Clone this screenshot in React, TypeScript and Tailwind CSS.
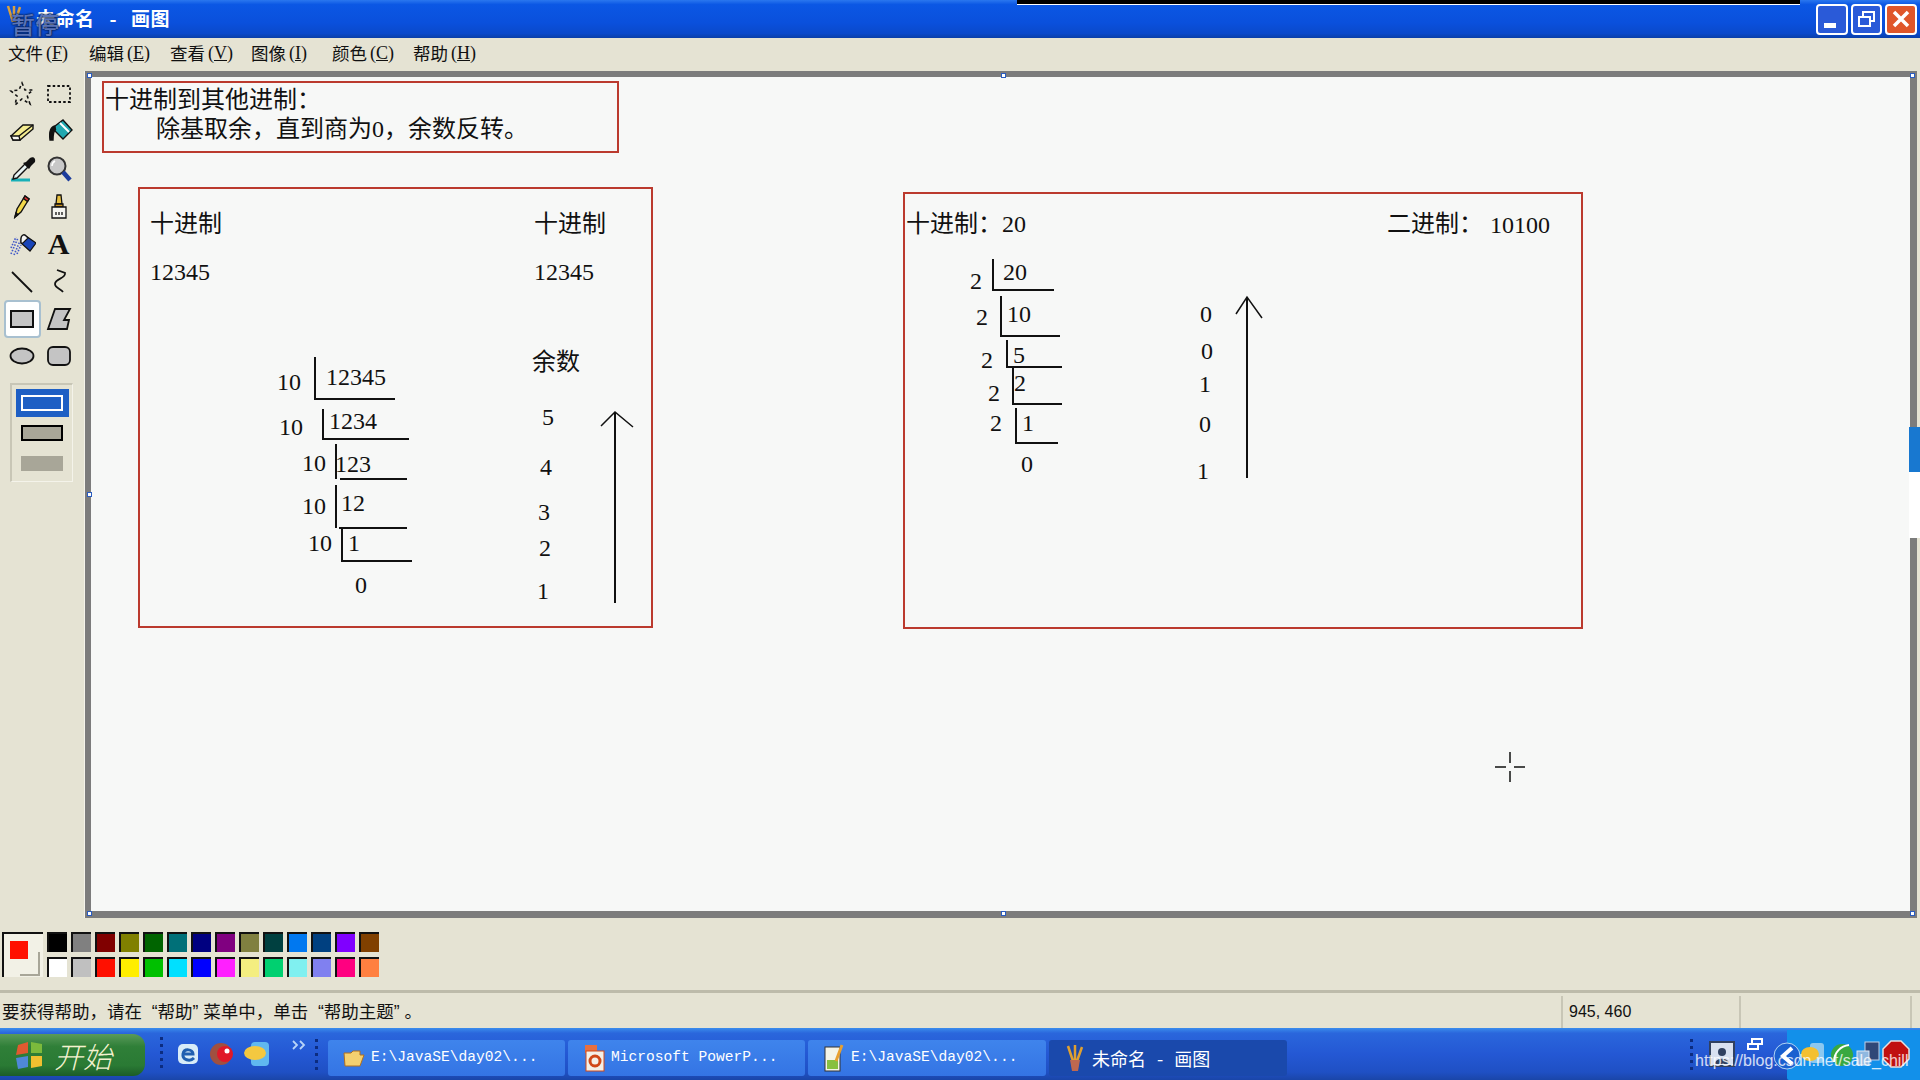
import React from 'react';

const serif = "font-['Liberation_Serif','Noto_Sans_CJK_SC',serif]";
const cjk = "font-['Noto_Sans_CJK_SC','Liberation_Sans',sans-serif]";
const latinFirst = "font-['Liberation_Sans','Noto_Sans_CJK_SC',sans-serif]";
const mono = "font-['Liberation_Mono','Noto_Sans_CJK_SC',monospace]";

const T: React.FC<{ c: string; children: React.ReactNode }> = ({ c, children }) => (
  <span className={`absolute -translate-y-1/2 whitespace-pre text-[24px] leading-none text-[#111] ${serif} ${c}`}>{children}</span>
);

const Handle: React.FC<{ c: string }> = ({ c }) => (
  <div className={`absolute h-[5px] w-[5px] border border-[#2a5cc0] bg-white ${c}`} />
);

// toolbox icons, one per cell
const toolIcons: React.ReactNode[] = [
  <path d="M14 3 L17 10 L25 10 L19 15 L22 24 L14 19 L7 25 L9 16 L3 11 L11 10 Z" fill="none" stroke="#111" strokeWidth="1.6" strokeDasharray="3 3" />,
  <rect x="3" y="6" width="22" height="16" fill="none" stroke="#111" strokeWidth="1.8" strokeDasharray="2.5 2.2" />,
  <g stroke="#111" strokeWidth="1.4"><path d="M3 19 L15 8 L25 8 L25 12 L12 23 L5 23 Z" fill="#f4ec90" /><path d="M3 19 L11 19 L12 23 L5 23 Z" fill="#f5f5f0" /><path d="M11 19 L25 8" /></g>,
  <g stroke="#111" strokeWidth="1.4"><path d="M10 9 L18 3 L27 13 L18 22 L10 14 Z" fill="#20a8b0" /><path d="M15 6 L24 15" stroke="#fff" strokeWidth="2" /><path d="M10 9 C5 10 4 15 5 23 L8 23 C8 18 8 14 11 12" fill="#111" /></g>,
  <g><path d="M3 25 L22 25" stroke="#18b0b8" strokeWidth="3" /><path d="M5 24 L6 20 L17 9 L20 12 L9 23 Z" fill="#e8f4f4" stroke="#111" strokeWidth="1.4" /><path d="M15 8 L21 14 L23 11 L27 7 C28 3 25 1 22 3 L18 7 Z" fill="#111" /></g>,
  <g><circle cx="12" cy="11" r="8.5" fill="#c8c8c8" stroke="#333" strokeWidth="2" /><path d="M10 6 A6 6 0 0 0 7 11" stroke="#fff" strokeWidth="1.5" fill="none" /><path d="M18 17 L25 25" stroke="#1c3c9c" strokeWidth="4.5" /></g>,
  <g stroke="#111" strokeWidth="1.4"><path d="M7 25 L9 17 L17 4 L21 7 L13 20 Z" fill="#f2d84a" /><path d="M15.5 6.5 L17 4 L21 7 L19.5 9.5 Z" fill="#d83030" /><path d="M7 25 L8 21 L10 22.5 Z" fill="#111" /></g>,
  <g stroke="#111" strokeWidth="1.3"><path d="M12 3 L16 3 L17 12 L11 12 Z" fill="#e8c040" /><path d="M10 12 L18 12 L18 15 L10 15 Z" fill="#c89020" /><path d="M7 15 L21 15 L21 26 L7 26 Z" fill="#f4f4f0" /><path d="M11 20 L11 23 M14 20 L14 23 M17 20 L17 23" /></g>,
  <g><path d="M3 24 L10 8 M6 25 L12 11 M3 18 L8 7 M9 24 L13 15" stroke="#4058c8" strokeWidth="1.6" strokeDasharray="1.5 1.5" /><path d="M13 9 C13 5 16 4 18 6 L28 13 L22 21 L13 13 Z" fill="#1844b8" stroke="#111" strokeWidth="1.2" /><path d="M13 9 C13 5 16 4 18 6 L20 8 L15 13 L13 13 Z" fill="#f4f4f4" stroke="#111" strokeWidth="1.2" /></g>,
  null,
  <path d="M4 5 L24 25" stroke="#111" strokeWidth="1.8" />,
  <path d="M12 3 L20 6 C21 12 10 11 10 17 C10 21 16 22 18 25" fill="none" stroke="#111" strokeWidth="1.8" />,
  <rect x="3" y="6" width="22" height="16" fill="#c4c4c4" stroke="#111" strokeWidth="2" />,
  <path d="M10 4 L25 4 L19 15 L24 15 L22 24 L3 24 Z" fill="#c4c4c4" stroke="#111" strokeWidth="1.8" />,
  <ellipse cx="14" cy="14" rx="11.5" ry="7.5" fill="#c4c4c4" stroke="#111" strokeWidth="1.8" />,
  <rect x="3" y="5" width="22" height="18" rx="5" fill="#c4c4c4" stroke="#111" strokeWidth="1.8" />,
];

const topSwatches = ['bg-[#000000]', 'bg-[#808080]', 'bg-[#800000]', 'bg-[#808000]', 'bg-[#006400]', 'bg-[#007078]', 'bg-[#000080]', 'bg-[#800080]', 'bg-[#808040]', 'bg-[#004040]', 'bg-[#0078f0]', 'bg-[#004080]', 'bg-[#8000ff]', 'bg-[#804000]'];
const bottomSwatches = ['bg-[#ffffff]', 'bg-[#c0c0c0]', 'bg-[#ff1000]', 'bg-[#ffee00]', 'bg-[#00c000]', 'bg-[#00e0ff]', 'bg-[#0000ff]', 'bg-[#ff20ff]', 'bg-[#f4ee80]', 'bg-[#00d070]', 'bg-[#80f0f0]', 'bg-[#8080f0]', 'bg-[#ff0080]', 'bg-[#ff8040]'];

const menus = [['文件', 'F'], ['编辑', 'E'], ['查看', 'V'], ['图像', 'I'], ['颜色', 'C'], ['帮助', 'H']];

const Grip = () => (
  <svg width="6" height="36" viewBox="0 0 6 36"><path d="M1.5 1 V35" stroke="#0c2c80" strokeWidth="3" strokeDasharray="3 4" /></svg>
);

const TaskButton: React.FC<{ w: string; active?: boolean; icon: React.ReactNode; children: React.ReactNode }> = ({ w, active, icon, children }) => (
  <div className={`flex h-[36px] items-center rounded-[3px] pl-[14px] text-white ${w} ${active ? 'bg-[#1a49ac]' : 'bg-[linear-gradient(180deg,#3f84ec,#3474e4)]'}`}>
    <span className="mr-[5px] flex w-[24px] justify-center">{icon}</span>
    {children}
  </div>
);

export default function App() {
  return (
    <div className="flex h-[1080px] w-[1920px] flex-col overflow-hidden bg-[#e5e3d3]">
      {/* title bar */}
      <div className="relative flex h-[38px] shrink-0 items-center bg-[linear-gradient(180deg,#2a77ef_0%,#0b57e4_12%,#0a50dc_60%,#0a49cb_88%,#0a3fa8_100%)]">
        <div className={`-mt-[2px] ml-[36px] flex items-center text-[19px] font-bold tracking-[0.5px] text-white ${cjk}`}>
          <span>未命名</span>
          <span className="ml-[15px]">-</span>
          <span className="ml-[14px]">画图</span>
        </div>
        <svg className="absolute left-[5px] top-[4px]" width="18" height="24" viewBox="0 0 18 24"><path d="M3 2 L8 18 M9 2 L9 18 M15 3 L10 18" stroke="#d8a040" strokeWidth="2.5" /></svg>
        <span className={`absolute left-[11px] top-[9px] text-[24px] font-medium leading-[30px] text-[#5a74b8] [text-shadow:0_0_2px_#06183c,0_0_2px_#06183c] ${cjk}`}>暂停</span>
        <div className="absolute left-[1017px] top-0 h-[5px] w-[783px] border-b border-white bg-black" />
        <div className="ml-auto mr-[3px] flex gap-[3px]">
          <div className="flex h-[31px] w-[32px] items-end rounded-[4px] border-2 border-white bg-[#2a5ad8] pb-[5px] pl-[6px]"><div className="h-[5px] w-[12px] bg-white" /></div>
          <div className="flex h-[31px] w-[31px] items-center justify-center rounded-[4px] border-2 border-white bg-[#2a5ad8]">
            <svg width="18" height="18" viewBox="0 0 18 18" fill="none" stroke="#fff" strokeWidth="2"><rect x="5" y="2" width="11" height="9" /><rect x="1" y="7" width="11" height="9" fill="#2a5ad8" /></svg>
          </div>
          <div className="flex h-[31px] w-[32px] items-center justify-center rounded-[4px] border-2 border-white bg-[#e0562a]">
            <svg width="20" height="20" viewBox="0 0 20 20"><path d="M3 3 L17 17 M17 3 L3 17" stroke="#fff" strokeWidth="3.5" /></svg>
          </div>
        </div>
      </div>

      {/* menu bar */}
      <div className={`flex h-[33px] shrink-0 items-center pb-[2px] pl-[8px] text-[17.5px] text-[#111] ${cjk}`}>
        {menus.map(([name, key]) => (
          <div key={key} className="flex w-[81px] items-center">
            <span>{name}</span>
            <span className={`ml-[3px] text-[18px] ${serif}`}>(<span className="underline">{key}</span>)</span>
          </div>
        ))}
      </div>

      <div className="flex min-h-0 flex-1">
        {/* tool box */}
        <div className="w-[85px] shrink-0 border-r border-[#f4f3ea] pl-[4px] pt-[4px]">
          <div className="grid grid-cols-[repeat(2,37px)] auto-rows-[37.5px]">
            {toolIcons.map((icon, i) => (
              <div key={i} className={`flex items-center justify-center rounded-[4px] ${i === 12 ? 'border-2 border-[#a8c0d0] bg-white' : ''}`}>
                {icon ? (
                  <svg className="-translate-x-px" width="28" height="28" viewBox="0 0 28 28">{icon}</svg>
                ) : (
                  <span className={`-translate-x-px text-[30px] font-bold leading-none text-[#111] ${serif}`}>A</span>
                )}
              </div>
            ))}
          </div>
          <div className="ml-[6px] mt-[8px] flex h-[99px] w-[63px] flex-col items-center border border-l-2 border-t-2 border-[#c8c6b6] border-r-[#f4f3ea] border-b-[#f4f3ea] pt-[4px]">
            <div className="flex h-[28px] w-[53px] items-center justify-center bg-[#1e5fc4]">
              <div className="h-[16px] w-[42px] border-2 border-white bg-[#1e5fc4]" />
            </div>
            <div className="mt-[8px] h-[16px] w-[42px] border-2 border-black bg-[#a8a698]" />
            <div className="mt-[15px] h-[15px] w-[42px] bg-[#a8a698]" />
          </div>
        </div>

        {/* canvas */}
        <div className="relative mr-[3px] flex-1 border-b-[7px] border-l-[6px] border-r-[7px] border-t-[6px] border-[#7c7c7c] bg-[#f7f8f7]">
          <Handle c="-left-[4px] -top-[4px]" />
          <Handle c="left-[910px] -top-[4px]" />
          <Handle c="-right-[5px] -top-[4px]" />
          <Handle c="-left-[4px] top-[415px]" />
          <Handle c="-left-[4px] -bottom-[5px]" />
          <Handle c="left-[910px] -bottom-[5px]" />
          <Handle c="-right-[5px] -bottom-[5px]" />

          <div className="absolute left-[11px] top-[4px] h-[72px] w-[517px] border-2 border-[#bb3a2e]" />
          <div className="absolute left-[47px] top-[110px] h-[441px] w-[515px] border-2 border-[#bb3a2e]" />
          <div className="absolute left-[812px] top-[115px] h-[437px] w-[680px] border-2 border-[#bb3a2e]" />

          <T c="left-[14px] top-[23px]">十进制到其他进制：</T>
          <T c="left-[65px] top-[52px]">除基取余，直到商为0，余数反转。</T>

          {/* left example */}
          <T c="left-[59px] top-[147px]">十进制</T>
          <T c="left-[59px] top-[195px]">12345</T>
          <T c="left-[443px] top-[147px]">十进制</T>
          <T c="left-[443px] top-[195px]">12345</T>
          <T c="left-[441px] top-[285px]">余数</T>
          <T c="left-[451px] top-[340px]">5</T>
          <T c="left-[449px] top-[390px]">4</T>
          <T c="left-[447px] top-[435px]">3</T>
          <T c="left-[448px] top-[471px]">2</T>
          <T c="left-[446px] top-[514px]">1</T>
          <T c="left-[186px] top-[305px]">10</T>
          <T c="left-[235px] top-[300px]">12345</T>
          <T c="left-[188px] top-[350px]">10</T>
          <T c="left-[238px] top-[344px]">1234</T>
          <T c="left-[211px] top-[386px]">10</T>
          <T c="left-[244px] top-[387px]">123</T>
          <T c="left-[211px] top-[429px]">10</T>
          <T c="left-[250px] top-[426px]">12</T>
          <T c="left-[217px] top-[466px]">10</T>
          <T c="left-[257px] top-[466px]">1</T>
          <T c="left-[264px] top-[508px]">0</T>

          {/* right example */}
          <T c="left-[815px] top-[147px]">十进制：20</T>
          <T c="left-[1296px] top-[147px]">二进制：</T>
          <T c="left-[1399px] top-[148px]">10100</T>
          <T c="left-[879px] top-[204px]">2</T>
          <T c="left-[912px] top-[195px]">20</T>
          <T c="left-[885px] top-[240px]">2</T>
          <T c="left-[916px] top-[237px]">10</T>
          <T c="left-[890px] top-[283px]">2</T>
          <T c="left-[922px] top-[278px]">5</T>
          <T c="left-[897px] top-[316px]">2</T>
          <T c="left-[923px] top-[306px]">2</T>
          <T c="left-[899px] top-[346px]">2</T>
          <T c="left-[931px] top-[346px]">1</T>
          <T c="left-[930px] top-[387px]">0</T>
          <T c="left-[1109px] top-[237px]">0</T>
          <T c="left-[1110px] top-[274px]">0</T>
          <T c="left-[1108px] top-[307px]">1</T>
          <T c="left-[1108px] top-[347px]">0</T>
          <T c="left-[1106px] top-[394px]">1</T>

          {/* hand drawn strokes, in page coordinates */}
          <svg className="pointer-events-none absolute left-0 top-0 h-[833px] w-[1819px]" viewBox="91 77 1819 833" fill="none" stroke="#111" strokeWidth="2">
            <path d="M315 357 V399 H395" />
            <path d="M323 409 V439 H409" />
            <path d="M336 444 V479 M340 479 H407" />
            <path d="M336 485 V528 M339 528 H407" />
            <path d="M342 528 V561 H412" />
            <path d="M615 412 V603" />
            <path d="M601 426 L615 412 L633 427" strokeWidth="1.5" />
            <path d="M993 259 V290 H1054" />
            <path d="M1001 296 V336 H1060" />
            <path d="M1007 340 V367 H1062" />
            <path d="M1013 367 V404 H1062" />
            <path d="M1016 408 V443 H1058" />
            <path d="M1247 297 V478" />
            <path d="M1236 314 L1247 297 L1262 318" strokeWidth="1.5" />
            <path d="M1510 752 V763 M1510 771 V782 M1495 767 H1506 M1514 767 H1525" strokeWidth="1.5" />
          </svg>

          <div className="absolute -right-[10px] top-[350px] h-[45px] w-[11px] bg-[#1878d0]" />
          <div className="absolute -right-[10px] top-[395px] h-[66px] w-[11px] bg-white" />
        </div>
      </div>

      {/* colour box */}
      <div className="flex h-[72px] shrink-0 items-start pl-[2px] pt-[14px]">
        <div className="relative mr-[4px] h-[45px] w-[41px] border-l-2 border-t-2 border-[#111] bg-[#f2f1e6]">
          <div className="absolute left-[16px] top-[18px] h-[24px] w-[20px] border-b-2 border-r-2 border-[#a8a698]" />
          <div className="absolute left-[6px] top-[7px] h-[18px] w-[18px] bg-[#ff1000]" />
        </div>
        <div className="grid grid-cols-[repeat(14,20px)] gap-x-[4px] gap-y-[5px]">
          {[...topSwatches, ...bottomSwatches].map((c, i) => (
            <div key={i} className={`h-[20px] w-[20px] border-l-2 border-t-2 border-[#111] ${c}`} />
          ))}
        </div>
      </div>

      {/* status bar */}
      <div className={`flex h-[38px] shrink-0 items-center border-t-[3px] border-[#bdbbaa] pt-[3px] text-[17.5px] text-[#111] ${latinFirst}`}>
        <div className="w-[1561px] whitespace-pre pl-[2px]">要获得帮助，请在  “帮助” 菜单中，单击  “帮助主题” 。</div>
        <div className="flex h-full w-[178px] items-center border-l-2 border-[#c8c6b6] pl-[6px] text-[16px]">945, 460</div>
        <div className="h-full w-[173px] border-l-2 border-r-2 border-[#c8c6b6]" />
      </div>

      {/* task bar */}
      <div className="relative flex h-[52px] shrink-0 items-center bg-[linear-gradient(180deg,#3a8cec_0%,#2a66dc_10%,#2458d4_50%,#1f50c4_85%,#1a45a8_100%)]">
        <div className="mt-[2px] flex h-[42px] w-[145px] items-center rounded-r-[12px] bg-[linear-gradient(180deg,#5a9a5a,#2f7f38_30%,#2a7a34_75%,#1c5c28)] pl-[15px]">
          <svg width="29" height="30" viewBox="0 0 29 30">
            <path d="M3 5 L13 2 L13 13 L1 15 Z" fill="#e05a30" />
            <path d="M16 2 L27 4 L27 13 L16 13 Z" fill="#7cba3c" />
            <path d="M1 18 L13 16 L13 27 L3 29 Z" fill="#4f88d8" />
            <path d="M16 16 L27 16 L27 26 L16 28 Z" fill="#f0c030" />
          </svg>
          <span className={`ml-[10px] text-[29px] font-light italic leading-none text-[#f4f2d0] ${cjk}`}>开始</span>
        </div>
        <div className="ml-[15px] mr-[10px]"><Grip /></div>
        <div className="flex items-center gap-[10px]">
          <svg width="24" height="26" viewBox="0 0 24 26"><rect x="2" y="3" width="20" height="20" rx="5" fill="#d8ecf8" /><path d="M7 13 H17 C17 8 8 7 7 13 C6 19 14 21 18 17" fill="none" stroke="#2060b0" strokeWidth="3" /></svg>
          <svg width="24" height="26" viewBox="0 0 24 26"><circle cx="11" cy="13" r="11" fill="#a05040" /><circle cx="15" cy="13" r="8" fill="#e01828" /><circle cx="17" cy="10" r="2.5" fill="#fff" /></svg>
          <svg width="26" height="26" viewBox="0 0 26 26"><rect x="7" y="1" width="18" height="24" rx="4" fill="#60b8f0" /><ellipse cx="11" cy="12" rx="11" ry="7" fill="#f4c840" /></svg>
          <svg className="-mt-[18px] ml-[12px]" width="14" height="10" viewBox="0 0 14 10" fill="none" stroke="#b8d4f8" strokeWidth="1.8"><path d="M1 1 L5 5 L1 9 M8 1 L12 5 L8 9" /></svg>
        </div>
        <div className="absolute left-[315px] top-[10px]"><Grip /></div>
        <div className={`absolute left-[328px] top-[12px] flex gap-[3px] text-[14.6px] ${mono}`}>
          <TaskButton w="w-[237px]" icon={<svg width="24" height="24" viewBox="0 0 24 24"><path d="M2 7 L9 7 L11 5 L18 5 L18 9 L22 9 L18 20 L3 20 Z" fill="#f4d070" stroke="#b07020" /></svg>}>E:\JavaSE\day02\...</TaskButton>
          <TaskButton w="w-[237px]" icon={<svg width="24" height="30" viewBox="0 0 24 30"><rect x="3" y="2" width="12" height="8" fill="#e87040" /><rect x="4" y="8" width="18" height="20" fill="#f4f0e8" stroke="#d04818" /><circle cx="13" cy="18" r="5" fill="none" stroke="#d04818" strokeWidth="3" /></svg>}>Microsoft PowerP...</TaskButton>
          <TaskButton w="w-[238px]" icon={<svg width="24" height="30" viewBox="0 0 24 30"><rect x="3" y="4" width="15" height="24" fill="#f4f4e8" stroke="#333" /><rect x="5" y="17" width="11" height="9" fill="#88c040" /><path d="M20 2 L14 18" stroke="#e8a030" strokeWidth="3" /></svg>}>E:\JavaSE\day02\...</TaskButton>
          <TaskButton w="w-[238px]" active icon={<svg width="20" height="30" viewBox="0 0 20 30"><path d="M3 3 L8 18 M10 2 L10 18 M17 4 L12 18" stroke="#e0a030" strokeWidth="2.5" /><path d="M5 17 H15 L13 28 H7 Z" fill="#c06850" /></svg>}>
            <span className={`flex text-[18px] ${cjk}`}>
              <span>未命名</span>
              <span className="ml-[11px]">-</span>
              <span className="ml-[11px]">画图</span>
            </span>
          </TaskButton>
        </div>

        {/* tray */}
        <div className="absolute bottom-0 right-0 top-[2px] w-[133px] rounded-bl-[2px] bg-[#1290ea]" />
        <div className="absolute left-[1690px] top-[10px]"><Grip /></div>
        <svg className="absolute left-[1708px] top-[12px]" width="28" height="28" viewBox="0 0 28 28"><rect x="2" y="2" width="24" height="24" fill="#d8e0f0" stroke="#304060" strokeWidth="2" /><circle cx="14" cy="12" r="4" fill="#304060" /><path d="M7 24 C7 17 21 17 21 24 Z" fill="#304060" /></svg>
        <svg className="absolute left-[1747px] top-[10px]" width="16" height="12" viewBox="0 0 16 12" fill="none" stroke="#fff" strokeWidth="2"><rect x="5" y="1" width="10" height="5" /><rect x="1" y="6" width="10" height="5" /></svg>
        <svg className="absolute left-[1773px] top-[12px]" width="28" height="32" viewBox="0 0 28 32"><circle cx="14" cy="16" r="13" fill="#1a60d0" stroke="#b0d4f4" /><path d="M19 8 L10 16 L19 24" fill="none" stroke="#fff" strokeWidth="4" /></svg>
        <svg className="absolute left-[1800px] top-[14px]" width="26" height="26" viewBox="0 0 26 26"><rect x="10" y="1" width="14" height="20" rx="3" fill="#8cc8f0" /><ellipse cx="10" cy="12" rx="9" ry="7" fill="#f4c030" /></svg>
        <svg className="absolute left-[1829px] top-[14px]" width="26" height="26" viewBox="0 0 26 26"><circle cx="13" cy="13" r="11" fill="#38a840" /><path d="M5 20 C5 10 12 4 20 3" fill="none" stroke="#fff" strokeWidth="2" /></svg>
        <svg className="absolute left-[1855px] top-[13px]" width="26" height="28" viewBox="0 0 26 28"><rect x="10" y="1" width="14" height="18" fill="#304878" stroke="#c0d0e8" /><rect x="2" y="10" width="12" height="14" fill="#90b8e0" stroke="#e0e8f4" /></svg>
        <svg className="absolute left-[1882px] top-[12px]" width="28" height="28" viewBox="0 0 28 28"><path d="M9 1 H19 L27 9 V19 L19 27 H9 L1 19 V9 Z" fill="#c01010" stroke="#e8e0e0" strokeWidth="1.5" /></svg>

        <span className="absolute left-[1695px] top-[21px] whitespace-pre text-[16px] leading-[24px] text-white/80 font-['Liberation_Sans',sans-serif]">https://blog.csdn.net/sale_chill</span>
      </div>
    </div>
  );
}
